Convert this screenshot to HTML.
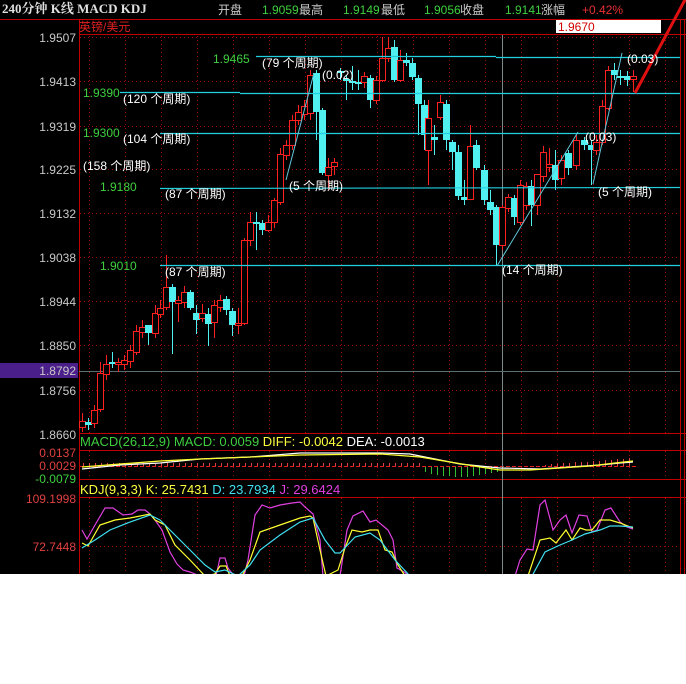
<!DOCTYPE html>
<html><head><meta charset="utf-8">
<style>
html,body{margin:0;padding:0;background:#fff;}
#w{position:relative;width:686px;height:684px;overflow:hidden;background:#fff;}
svg{position:absolute;left:0;top:0;}
text{font-family:"Liberation Sans","Noto Sans CJK SC",sans-serif;font-size:12px;}
text.big{font-size:13px;}
</style></head><body><div id="w">
<svg id="s" width="686" height="684" xmlns="http://www.w3.org/2000/svg">
<rect x="0" y="0" width="686" height="574" fill="#000"/>
<g id="grid"></g>
<g stroke="#c00000" stroke-width="1" fill="none">
<line x1="0" y1="19.5" x2="686" y2="19.5"/>
<line x1="79" y1="34.5" x2="686" y2="34.5"/>
<line x1="79.5" y1="20" x2="79.5" y2="574"/>
<line x1="680.5" y1="20" x2="680.5" y2="574"/>
<line x1="684.5" y1="20" x2="684.5" y2="574"/>
<line x1="79" y1="433.5" x2="686" y2="433.5"/>
<line x1="79" y1="450.5" x2="686" y2="450.5"/>
<line x1="79" y1="479.5" x2="686" y2="479.5"/>
<line x1="79" y1="497.5" x2="686" y2="497.5"/>
</g>
<line x1="502.5" y1="35" x2="502.5" y2="574" stroke="#7a8a8a"/>
<line x1="79" y1="371.5" x2="680" y2="371.5" stroke="#5a7070"/>
<rect x="0" y="363" width="78" height="15" fill="#4b1f8a"/>
<text x="2" y="13" fill="#e0e0e0" style="font-family:'Liberation Serif','Noto Serif CJK SC',serif;font-weight:bold;font-size:13px">240分钟 K线 MACD KDJ</text>
<text x="218" y="14" fill="#ccc">开盘</text><text x="262" y="14" fill="#3fd03f">1.9059</text>
<text x="299" y="14" fill="#ccc">最高</text><text x="343" y="14" fill="#3fd03f">1.9149</text>
<text x="381" y="14" fill="#ccc">最低</text><text x="424" y="14" fill="#3fd03f">1.9056</text>
<text x="460" y="14" fill="#ccc">收盘</text><text x="505" y="14" fill="#3fd03f">1.9141</text>
<text x="541" y="14" fill="#ccc">涨幅</text><text x="582" y="14" fill="#e83030">+0.42%</text>
<text x="79" y="31" fill="#e02020">英镑/美元</text>
<rect x="556" y="20" width="105" height="13" fill="#fff"/>
<text x="558" y="31" fill="#d00000">1.9670</text>
<g fill="#c8c8c8" text-anchor="end">
<text x="76" y="42">1.9507</text><text x="76" y="86">1.9413</text><text x="76" y="131">1.9319</text>
<text x="76" y="174">1.9225</text><text x="76" y="218">1.9132</text><text x="76" y="262">1.9038</text>
<text x="76" y="306">1.8944</text><text x="76" y="350">1.8850</text><text x="76" y="375">1.8792</text>
<text x="76" y="395">1.8756</text><text x="76" y="439">1.8660</text>
</g>
<g text-anchor="end"><text x="76" y="457" fill="#e04040">0.0137</text><text x="76" y="470" fill="#e04040">0.0029</text><text x="76" y="483" fill="#3fd03f">-0.0079</text>
<text x="76" y="503" fill="#e04040">109.1998</text><text x="76" y="551" fill="#e04040">72.7448</text></g>
<text class="big" x="80" y="446" fill="#3fd03f">MACD(26,12,9) MACD: 0.0059 <tspan fill="#ffff40">DIFF: -0.0042</tspan> <tspan fill="#fff">DEA: -0.0013</tspan></text>
<text class="big" x="80" y="494" fill="#ffff40">KDJ(9,3,3) K: 25.7431 <tspan fill="#40e0f0">D: 23.7934</tspan> <tspan fill="#e040e0">J: 29.6424</tspan></text>
<g id="cdl"></g>
<g stroke="#20d0e0" stroke-width="1.2">
<line x1="256" y1="56.5" x2="496" y2="56.5"/><line x1="496" y1="57.5" x2="680" y2="57.5"/>
<line x1="120" y1="92.5" x2="240" y2="92.5"/><line x1="240" y1="93.5" x2="680" y2="93.5"/>
<line x1="160" y1="133.5" x2="680" y2="133.5"/>
<line x1="160" y1="188.5" x2="680" y2="187.5"/>
<line x1="160" y1="265.5" x2="680" y2="265.5"/>
</g>
<g stroke="#60c8d8" stroke-width="1"><line x1="286" y1="180" x2="314" y2="73"/><line x1="497" y1="266" x2="578" y2="132"/><line x1="593" y1="184" x2="622" y2="53"/></g>
<line x1="635" y1="93" x2="686" y2="-2" stroke="#e01010" stroke-width="3"/>
<g fill="#3fd03f"><text x="213" y="63">1.9465</text><text x="83" y="97">1.9390</text><text x="83" y="137">1.9300</text><text x="100" y="191">1.9180</text><text x="100" y="270">1.9010</text></g>
<g fill="#fff">
<text x="262" y="67">(79 个周期)</text><text x="123" y="103">(120 个周期)</text><text x="123" y="143">(104 个周期)</text>
<text x="83" y="170">(158 个周期)</text><text x="165" y="198">(87 个周期)</text><text x="165" y="276">(87 个周期)</text>
<text x="289" y="190">(5 个周期)</text><text x="322" y="79">(0.02)</text><text x="585" y="141">(0.03)</text>
<text x="598" y="196">(5 个周期)</text><text x="502" y="274">(14 个周期)</text><text x="627" y="63">(0.03)</text>
</g>
<g id="macd"></g>
<g fill="none" stroke-width="1.2">
<polyline stroke="#ffffff" points="82,469 120,465 160,463 200,459 250,457 300,453 380,453 410,454 430,458 460,464 490,467 500,468 540,469 570,467 600,465 620,463 633,462"/>
<polyline stroke="#ffff30" points="82,467 120,464 160,461 200,459 250,457 300,455 380,454 420,457 450,462 480,467 500,470 530,470 560,468 590,466 615,463 633,461"/>
<polyline stroke="#e040e0" points="82,530 87,539 95,525 105,508 113,508 123,515 132,514 138,510 145,510 150,514 155,520 162,530 170,552 177,564 183,570 190,572 200,576 216,576 220,558 225,558 228,568 234,576 244,576 248,560 255,515 262,505 270,508 280,505 292,503 300,502 305,507 313,514 320,540 323,576 340,576 347,530 353,516 363,511 370,522 376,520 388,530 393,540 397,568 404,572 410,576 515,576 520,560 527,549 533,550 540,505 545,500 553,530 560,520 566,515 572,533 579,515 587,516 592,532 597,530 605,510 611,508 620,522 627,527 633,529"/>
<polyline stroke="#ffff30" points="82,543 88,546 100,525 115,520 130,518 150,514 155,520 165,525 175,545 190,560 205,576 215,574 220,566 226,566 230,576 242,576 250,560 260,532 280,525 300,518 310,516 313,518 320,550 326,576 338,570 345,548 352,530 362,532 370,530 378,530 385,550 392,552 398,565 405,576 528,576 540,540 550,538 556,543 566,530 572,540 580,528 586,530 592,530 600,520 610,520 620,523 633,528"/>
<polyline stroke="#40e0f0" points="82,548 95,540 110,530 130,522 150,515 160,520 175,535 190,550 205,565 215,572 225,570 238,576 250,565 260,550 280,535 300,522 313,518 325,540 335,553 340,553 355,537 370,533 380,540 395,560 410,576 532,576 545,552 560,545 572,540 585,534 600,530 610,526 620,526 633,527"/>
</g>
<rect x="0" y="574" width="686" height="110" fill="#fff"/>
</svg>
</div>
<script>
var NS="http://www.w3.org/2000/svg";
function el(p,t,a){var e=document.createElementNS(NS,t);for(var k in a)e.setAttribute(k,a[k]);p.appendChild(e);return e;}
var g=document.getElementById('grid');
[37,81,126,169,213,257,301,345,390].forEach(function(y){el(g,'line',{x1:80,y1:y+.5,x2:680,y2:y+.5,stroke:'#a00000','stroke-dasharray':'1,3'});});
el(g,'line',{x1:80,y1:466.5,x2:636,y2:466.5,stroke:'#e02020','stroke-dasharray':'4,2'});
el(g,'line',{x1:80,y1:546.5,x2:680,y2:546.5,stroke:'#a00000','stroke-dasharray':'1,3'});
for(var x=89;x<680;x+=36){if(x==501)continue;el(g,'line',{x1:x+.5,y1:36,x2:x+.5,y2:433,stroke:'#a00000','stroke-dasharray':'1,3'});el(g,'line',{x1:x+.5,y1:451,x2:x+.5,y2:479,stroke:'#a00000','stroke-dasharray':'1,3'});el(g,'line',{x1:x+.5,y1:498,x2:x+.5,y2:574,stroke:'#a00000','stroke-dasharray':'1,3'});}
var C=[[82,421,427,413,432,'r'],[88,422,425,418,430,'c'],[94,410,423,405,428,'r'],[100,373,409,362,412,'r'],[106,364,374,355,380,'r'],[112,362,364,352,368,'c'],[118,362,364,358,372,'r'],[124,360,364,355,370,'r'],[130,350,361,345,368,'r'],[136,331,352,325,355,'r'],[142,327,332,320,338,'r'],[148,325,333,325,345,'c'],[155,313,333,305,338,'r'],[160,308,314,300,318,'r'],[166,287,307,255,310,'r'],[172,287,302,284,354,'c'],[178,300,303,296,322,'r'],[184,292,302,286,308,'r'],[190,292,308,290,310,'c'],[196,313,320,305,334,'c'],[202,313,318,304,322,'r'],[208,314,324,308,346,'c'],[214,305,322,300,338,'r'],[220,300,307,295,312,'r'],[226,299,310,296,315,'c'],[232,311,325,308,336,'c'],[238,323,325,308,334,'r'],[244,240,323,238,325,'r'],[250,222,240,212,246,'r'],[256,222,223,212,250,'c'],[262,223,230,220,235,'c'],[268,222,230,215,232,'r'],[274,200,222,198,228,'r'],[280,154,202,148,205,'r'],[286,145,155,140,160,'r'],[292,120,145,115,150,'r'],[298,112,120,105,125,'r'],[304,106,114,100,120,'r'],[310,75,113,70,120,'r'],[316,73,112,70,140,'c'],[322,110,173,108,175,'c'],[328,167,175,158,190,'r'],[334,162,166,158,175,'r'],[340,71,73,68,80,'c'],[346,79,81,75,100,'c'],[352,81,83,66,90,'c'],[358,82,84,70,90,'c'],[364,76,82,72,88,'r'],[370,78,100,75,108,'c'],[376,80,100,76,104,'r'],[382,58,80,37,82,'r'],[388,48,58,37,62,'r'],[394,47,80,40,82,'c'],[400,60,80,50,82,'r'],[406,60,63,53,66,'c'],[412,63,77,58,80,'c'],[418,78,104,75,135,'c'],[424,105,135,100,150,'c'],[428,118,150,100,185,'r'],[434,137,140,125,155,'c'],[440,102,117,95,120,'r'],[446,104,140,100,150,'c'],[452,142,152,140,170,'c'],[458,152,196,145,200,'c'],[464,197,200,180,205,'c'],[470,146,199,125,200,'r'],[476,145,168,140,170,'c'],[484,170,200,165,205,'c'],[490,202,210,190,215,'c'],[496,207,245,205,265,'c'],[502,207,245,205,250,'r'],[508,197,208,194,212,'r'],[514,198,217,195,225,'c'],[520,185,222,180,225,'r'],[526,186,205,182,210,'r'],[531,186,205,180,226,'c'],[537,174,205,175,215,'r'],[543,152,176,146,182,'r'],[549,164,167,148,172,'r'],[555,165,180,150,190,'c'],[561,160,178,155,185,'r'],[568,153,168,150,175,'c'],[576,140,165,135,170,'r'],[584,140,145,137,150,'c'],[591,145,150,140,185,'c'],[596,142,150,135,155,'r'],[602,106,142,100,145,'r'],[608,70,108,66,110,'r'],[614,70,75,63,80,'c'],[620,76,77,70,85,'c'],[627,76,80,71,86,'c'],[633,76,79,70,92,'r']];
var cd=document.getElementById('cdl');
C.forEach(function(c){var col=c[5]=='r'?'#ff2020':'#50f0f0';
el(cd,'line',{x1:c[0]+.5,y1:c[3],x2:c[0]+.5,y2:c[4],stroke:col});
if(c[5]=='r')el(cd,'rect',{x:c[0]-2.5,y:c[1]+.5,width:6,height:Math.max(1,c[2]-c[1]),fill:'#000',stroke:col});
else el(cd,'rect',{x:c[0]-3,y:c[1],width:7,height:Math.max(2,c[2]-c[1]),fill:col});});
var m=document.getElementById('macd');
for(var x=83;x<634;x+=6){var h;
if(x<420){el(m,'line',{x1:x+.5,y1:463,x2:x+.5,y2:466,stroke:'#e04040'});}
else if(x<500){h=Math.round(4+6*Math.sin((x-420)/80*Math.PI));el(m,'line',{x1:x+.5,y1:467,x2:x+.5,y2:467+h,stroke:'#30c030'});}
else if(x>540){h=Math.round((x-540)/95*7)+1;el(m,'line',{x1:x+.5,y1:466-h,x2:x+.5,y2:466,stroke:'#e04040'});}}
</script>
</body></html>
